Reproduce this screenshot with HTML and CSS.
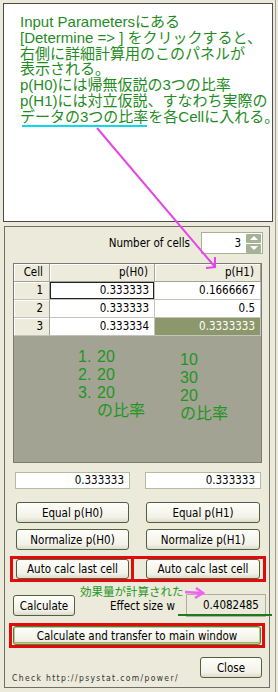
FILE: index.html
```html
<!DOCTYPE html>
<html>
<head>
    <meta charset="utf-8">
    <title>Effect size panel</title>
    <link rel="stylesheet" href="styles.css">
</head>
<body>
<div class="window">
    <div class="note">
        Input Parametersにある<br>
        [Determine =&gt; ] をクリックすると、<br>
        右側に詳細計算用のこのパネルが<br>
        表示される。<br>
        p(H0)には帰無仮説の3つの比率<br>
        p(H1)には対立仮説、すなわち実際の<br>
        データの3つの比率を各Cellに入れる。
    </div>

    <div class="panel">
        <div class="count-row">
            <span>Number of cells</span>
            <div class="spinner">
                <span class="spin-value">3</span>
                <div class="spin-buttons">
                    <span class="spin-btn"><span class="tri-up"></span></span>
                    <span class="spin-btn"><span class="tri-down"></span></span>
                </div>
            </div>
        </div>

        <div class="grid">
            <div class="grid-rows">
                <div class="head">Cell</div>
                <div class="head">p(H0)</div>
                <div class="head">p(H1)</div>

                <div class="num">1</div>
                <div class="val focus">0.333333</div>
                <div class="val">0.1666667</div>

                <div class="num">2</div>
                <div class="val">0.333333</div>
                <div class="val">0.5</div>

                <div class="num">3</div>
                <div class="val">0.333334</div>
                <div class="val selected">0.3333333</div>
            </div>
            <div class="grid-space">
                <div class="memo-left">
                    <span>1.</span><span>20</span>
                    <span>2.</span><span>20</span>
                    <span>3.</span><span>20</span>
                    <span></span><span>の比率</span>
                </div>
                <div class="memo-right">
                    10<br>30<br>20<br>の比率
                </div>
            </div>
        </div>

        <div class="pair fields">
            <div class="field left">0.333333</div>
            <div class="field right">0.333333</div>
        </div>

        <div class="pair buttons">
            <button type="button" class="btn left">Equal p(H0)</button>
            <button type="button" class="btn right">Equal p(H1)</button>
        </div>

        <div class="pair buttons second">
            <button type="button" class="btn left">Normalize p(H0)</button>
            <button type="button" class="btn right">Normalize p(H1)</button>
        </div>

        <div class="auto-row">
            <div class="auto-cell first">
                <button type="button" class="btn left">Auto calc last cell</button>
            </div>
            <div class="auto-cell">
                <button type="button" class="btn right">Auto calc last cell</button>
            </div>
        </div>

        <div class="effect-row">
            <button type="button" class="btn calc">Calculate</button>
            <span class="effect-label">Effect size w</span>
            <div class="effect-value">0.4082485</div>
            <span class="effect-note">効果量が計算された</span>
        </div>

        <div class="transfer-row">
            <button type="button" class="btn transfer">Calculate and transfer to main window</button>
        </div>

        <div class="footer">
            <span class="check">Check http://psystat.com/power/</span>
            <button type="button" class="btn close">Close</button>
        </div>
    </div>

    <!-- annotation marks drawn over the screenshot -->
    <svg class="marks" width="278" height="692" viewBox="0 0 278 692">
        <line x1="22" y1="126" x2="147" y2="126" stroke="#10d8e8" stroke-width="2"/>
        <line x1="97" y1="128" x2="215" y2="267" stroke="#e646e6" stroke-width="2"/>
        <line x1="206" y1="268" x2="216" y2="267" stroke="#e646e6" stroke-width="2"/>
        <line x1="215" y1="257" x2="215" y2="268" stroke="#e646e6" stroke-width="2"/>
        <line x1="185" y1="592" x2="202" y2="593" stroke="#f460f4" stroke-width="2.5"/>
        <polyline points="196,588 203,593 195,598" fill="none" stroke="#f460f4" stroke-width="2.5"/>
        <line x1="178" y1="615" x2="272" y2="615" stroke="#1f7a1f" stroke-width="2"/>
    </svg>
</div>
</body>
</html>
```

FILE: styles.css
```css
body {
    margin: 0;
    background-color: #ebeadb;
    font-family: "DejaVu Sans Condensed", "DejaVu Sans", sans-serif;
    font-stretch: condensed;
    font-size: 11.5px;
    color: #000;
}

.window {
    position: relative;
    width: 276px;
    height: 692px;
    padding-top: 3px;
    box-sizing: border-box;
    border-right: 1px solid #a09f94;
}

.note {
    margin-left: 3px;
    width: 270px;
    height: 219px;
    box-sizing: border-box;
    padding: 10px 0 0 16px;
    border: 1px solid #4b4b4b;
    background-color: #fff;
    font-family: "Liberation Sans", "Noto Sans CJK JP", sans-serif;
    font-stretch: normal;
    font-size: 15px;
    line-height: 15.8px;
    color: #1f8c1f;
    white-space: nowrap;
}

.panel {
    margin: 4px 0 0 4px;
    width: 266px;
    height: 462px;
    box-sizing: border-box;
    border: 1px solid #6f6f68;
}

/* number of cells */
.count-row {
    display: flex;
    justify-content: flex-end;
    align-items: center;
    gap: 11px;
    margin-top: 5px;
    padding-right: 6px;
    height: 22px;
}

.spinner {
    display: flex;
    align-items: center;
    width: 62px;
    height: 22px;
    box-sizing: border-box;
    border: 1px solid #a9b098;
    background-color: #fff;
}

.spin-value {
    flex: 1;
    text-align: right;
    padding-right: 5px;
}

.spin-buttons {
    display: flex;
    flex-direction: column;
    gap: 1px;
    padding: 1px 1px 1px 0;
}

.spin-btn {
    display: flex;
    align-items: center;
    justify-content: center;
    width: 15px;
    height: 9px;
    background-color: #a6b296;
    border-radius: 1px;
}

.tri-up,
.tri-down {
    width: 0;
    height: 0;
    border-left: 4px solid transparent;
    border-right: 4px solid transparent;
}

.tri-up {
    border-bottom: 4px solid #fff;
}

.tri-down {
    border-top: 4px solid #fff;
}

/* table */
.grid {
    margin: 9px 0 0 8px;
    width: 249px;
    height: 200px;
    box-sizing: border-box;
    border: 1px solid #7b7b74;
    display: flex;
    flex-direction: column;
}

.grid-rows {
    display: grid;
    grid-template-columns: 36px 105px 106px;
    grid-template-rows: 18px 18px 18px 18px;
}

.grid-rows > div {
    box-sizing: border-box;
    text-align: right;
    padding-right: 6px;
    line-height: 17px;
    border-right: 1px solid #c4c4bc;
    border-bottom: 1px solid #c4c4bc;
}

.grid-rows .head {
    background-color: #ecebdc;
    border-right: 1px solid #a3a298;
    border-bottom: 1px solid #a3a298;
    box-shadow: inset 1px 1px 0 #fff;
}

.grid-rows .num {
    background-color: #ecebdc;
    border-right: 1px solid #a3a298;
    box-shadow: inset 1px 1px 0 #fff;
}

.grid-rows .val {
    background-color: #fff;
    padding-right: 5px;
}

.grid-rows .focus {
    box-shadow: inset 0 0 0 1px #222;
}

.grid-rows .selected {
    background-color: #8d976c;
    color: #fff;
}

.grid-space {
    flex: 1;
    display: flex;
    padding: 12px 0 0 64px;
    background-color: #a3a394;
    font-family: "Liberation Sans", "Noto Sans CJK JP", sans-serif;
    font-stretch: normal;
    font-size: 16px;
    line-height: 18px;
    color: #1f961f;
}

.memo-left {
    display: grid;
    grid-template-columns: 19px auto;
    align-content: start;
    width: 102px;
}

.memo-right {
    margin-top: 3px;
}

/* two-column rows */
.pair {
    display: flex;
}

.fields {
    margin: 9px 0 0 10px;
    gap: 15px;
}

.field {
    height: 17px;
    box-sizing: border-box;
    border: 1px solid #b3bba3;
    background-color: #fff;
    text-align: right;
    padding-right: 5px;
    line-height: 15px;
}

.field.left {
    width: 115px;
}

.field.right {
    width: 116px;
}

.buttons {
    margin: 13px 0 0 11px;
    gap: 17px;
}

.buttons.second {
    margin-top: 6px;
}

.btn {
    display: flex;
    align-items: center;
    justify-content: center;
    height: 21px;
    box-sizing: border-box;
    padding: 0;
    border: 1px solid #52603e;
    border-radius: 3px;
    background: linear-gradient(#fefefb, #f3f2e8 75%, #dddbcc);
    font: inherit;
    color: #000;
}

.btn.left {
    width: 113px;
}

.btn.right {
    width: 114px;
}

.auto-row {
    display: flex;
    margin: 6px 0 0 5px;
    width: 256px;
    box-sizing: border-box;
    border: 3px solid #e20a0a;
}

.auto-cell {
    display: flex;
}

.auto-cell.first {
    width: 121px;
    padding-left: 3px;
    box-sizing: border-box;
    border-right: 3px solid #e20a0a;
}

.auto-cell + .auto-cell {
    padding-left: 12px;
}

.auto-row .btn {
    height: 20px;
}

/* effect size */
.effect-row {
    position: relative;
    display: flex;
    align-items: center;
    margin: 12px 0 0 8px;
    height: 23px;
}

.btn.calc {
    width: 62px;
}

.effect-label {
    margin-left: 35px;
}

.effect-value {
    margin-left: 11px;
    width: 80px;
    height: 23px;
    box-sizing: border-box;
    border: 1px solid #aeae9e;
    text-align: right;
    padding-right: 6px;
    line-height: 21px;
}

.effect-note {
    position: absolute;
    left: 67px;
    top: -10px;
    font-family: "Noto Sans CJK JP", sans-serif;
    font-stretch: normal;
    font-size: 11.5px;
    line-height: 14px;
    color: #1f961f;
}

.transfer-row {
    margin: 6px 0 0 4px;
    width: 256px;
    box-sizing: border-box;
    border: 3px solid #e20a0a;
    padding: 0 1px;
}

.btn.transfer {
    width: 100%;
    height: 19px;
    border-color: #5d7a3c;
    box-shadow: inset 0 0 0 1px #b6cc8e, inset 0 -2px 0 #9ab86c;
}

.footer {
    display: flex;
    justify-content: space-between;
    margin-top: 9px;
    padding: 0 7px;
    height: 26px;
}

.check {
    align-self: flex-end;
    font-size: 8.5px;
    letter-spacing: 1.35px;
    line-height: 10px;
    color: #333;
}

.btn.close {
    width: 62px;
}

.marks {
    position: absolute;
    top: 0;
    left: 0;
    pointer-events: none;
}
```
